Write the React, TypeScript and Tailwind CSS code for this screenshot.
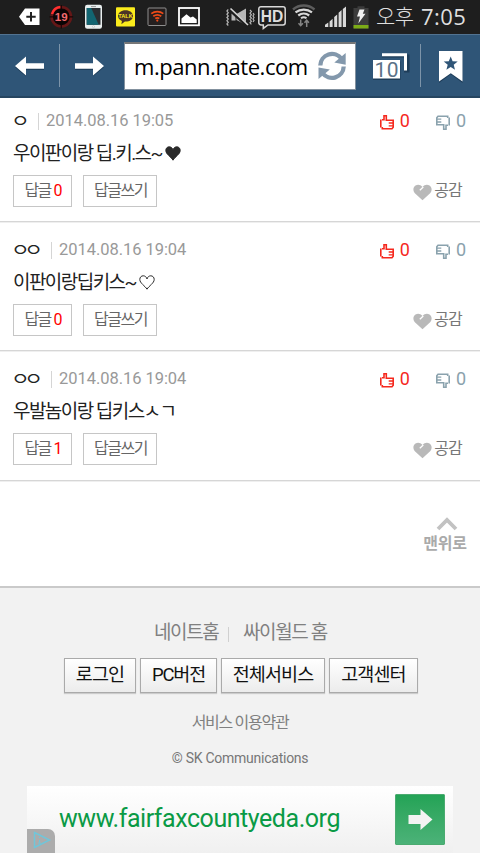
import React from 'react';

type Vote = 'up' | 'down';

interface Comment {
  author: string;
  date: string;
  body: string;
  heart?: 'solid' | 'outline';
  replies: number;
  rowClass: string;
  authorClass: string;
}

const comments: Comment[] = [
  { author: 'ㅇ', date: '2014.08.16 19:05', body: '우이판이랑 딥.키.스~', heart: 'solid', replies: 0, rowClass: 'h-[124px] pt-[13px]', authorClass: 'w-[15px]' },
  { author: 'ㅇㅇ', date: '2014.08.16 19:04', body: '이판이랑딥키스~', heart: 'outline', replies: 0, rowClass: 'h-[129px] pt-[18px]', authorClass: 'w-[28px]' },
  { author: 'ㅇㅇ', date: '2014.08.16 19:04', body: '우발놈이랑 딥키스ㅅㄱ', replies: 1, rowClass: 'h-[130px] pt-[18px]', authorClass: 'w-[28px]' },
];

/* A vertical slice of a bar, drawn in the bar's own coordinates. */
function Slice({ x, w, y = 0, h = 33, children }: { x: number; w: number; y?: number; h?: number; children: React.ReactNode }) {
  return (
    <svg className="block shrink-0" width={w} height={h} viewBox={`${x} ${y} ${w} ${h}`} fill="none">
      {children}
    </svg>
  );
}

function StatusBar() {
  return (
    <div className="flex h-[34px] items-start bg-[#1e1e1e]">
      <Slice x={0} w={45}>
        <path d="M25 8.5H39.5V25H25L19 16.8Z" fill="#fff" />
        <path d="M31 12v9.4M26.3 16.7h9.4" stroke="#222" strokeWidth="2" />
      </Slice>
      <Slice x={45} w={32}>
        <circle cx="61.3" cy="16.8" r="9.7" fill="#0b0505" stroke="#651717" strokeWidth="2.6" />
        <path d="M52 14A9.8 9.8 0 0 1 60.4 7" stroke="#ff3030" strokeWidth="2.4" />
        <path d="M61.3 5v4M61.3 24.5v4M49.5 16.8h3.5M69.6 16.8h3.5" stroke="#190606" strokeWidth="1.2" />
        <text x="61.2" y="21" textAnchor="middle" fontSize="11.5" fontWeight="700" fill="#f26a70" fontFamily="Liberation Sans, sans-serif">19</text>
      </Slice>
      <Slice x={77} w={32}>
        <rect x="85" y="4.7" width="17" height="24" rx="2.2" fill="#e9eeee" />
        <rect x="86.7" y="8" width="13.8" height="16.8" fill="#2b2f33" />
        <path d="M86.7 8h4.5l7.5 16.8h-12z" fill="#126571" />
        <path d="M91 6.6h5" stroke="#999" />
        <circle cx="93.5" cy="26.7" r="1" fill="#fff" stroke="#aaa" strokeWidth=".5" />
      </Slice>
      <Slice x={109} w={32}>
        <rect x="116" y="7.3" width="19" height="19.2" rx="1" fill="#fbec1c" />
        <path d="M125.5 10.3c-4.300 0-7.500 2.500-7.500 5.600 0 2.200 1.600 4 3.900 5l-.5 3.300 3.500-2.700c5 .2 8.100-2.400 8.100-5.600s-3.200-5.600-7.500-5.600z" fill="#4b3427" />
        <text x="125.5" y="18.2" textAnchor="middle" fontSize="5.6" fontWeight="700" fill="#fbec1c" fontFamily="Liberation Sans, sans-serif">TALK</text>
      </Slice>
      <Slice x={141} w={32}>
        <rect x="148" y="8" width="18" height="17.500" rx="1" fill="#241f1f" stroke="#8f8f8f" />
        <path d="M151.300 13.600c3.500-2.600 8.500-2.600 12 0M153.300 16.200c2.400-1.700 5.600-1.700 8 0M155.300 18.500c1.300-.8 2.700-.8 4 0" stroke="#ee4b18" strokeWidth="1.700" />
        <circle cx="157.300" cy="20.600" r="1.100" fill="#ee4b18" />
      </Slice>
      <Slice x={173} w={47}>
        <rect x="179" y="8" width="20" height="17.300" fill="#202020" stroke="#fff" strokeWidth="1.800" />
        <path d="M181.500 23v-4.500l5-4.300 4 3.300 2.500-1 3.700 3v3.500z" fill="#fff" />
      </Slice>
      <Slice x={220} w={36}>
        <path d="M228.300 9.500l-1.400 1.600 1.400 1.600-1.400 1.600 1.400 1.600-1.400 1.600 1.400 1.600-1.400 1.600 1.400 1.600-1.400 1.600 1.400 1.600M250 10l1.400 1.600-1.400 1.600 1.400 1.600-1.400 1.600 1.400 1.600-1.400 1.600 1.400 1.600-1.400 1.600 1.400 1.600M253 13l1 1.500-1 1.500 1 1.500-1 1.500 1 1.500-1 1.500" stroke="#b5b5b5" strokeWidth="1.200" />
        <path d="M231.500 13.500h4v7h-4zM236.500 14l9.500-5.500v16.500l-9.500-5z" fill="#b7b7b7" />
        <path d="M229.500 9.500l18.500 17" stroke="#1e1e1e" strokeWidth="3.200" />
        <path d="M230.500 8.500l17.500 16.500" stroke="#d7d7d7" strokeWidth="1.600" />
      </Slice>
      <Slice x={256} w={33}>
        <path d="M261 6.700h22a2.200 2.200 0 0 1 2.200 2.200v13.800a2.200 2.200 0 0 1-2.200 2.200h-15l-4.700 3.500v-3.500H261a2.200 2.200 0 0 1-2.200-2.200V8.900a2.200 2.200 0 0 1 2.200-2.200z" stroke="#d9d9d9" strokeWidth="1.500" />
        <text x="260.800" y="21.900" textLength="22.500" lengthAdjust="spacingAndGlyphs" fontSize="17" fontWeight="700" fill="#dedede" fontFamily="Liberation Sans, sans-serif">HD</text>
      </Slice>
      <Slice x={289} w={32}>
        <path d="M293 9.500c6-5.300 15.500-5.300 21.500 0" stroke="#5d5d5d" strokeWidth="2.400" />
        <path d="M295.500 12.300c4.800-3.700 11.700-3.700 16.500 0M298.300 15.500c3.200-2.400 7.700-2.400 10.900 0" stroke="#d8d8d8" strokeWidth="2.200" />
        <path d="M301 18.300c1.700-1.200 3.800-1.200 5.500 0" stroke="#d8d8d8" strokeWidth="2" />
        <path d="M300.700 19.500v6M298.500 23.200l2.200 2.500 2.200-2.500M306.700 27v-6M304.500 22.700l2.200-2.500 2.200 2.500" stroke="#858585" strokeWidth="1.500" />
      </Slice>
      <Slice x={321} w={28}>
        <path d="M325 27v-2.300l3.300-2.300V27zM329.600 27v-5.500l3-2.800V27zM334.200 27V17l3-2.600V27zM338.600 27V12.700l3-2.800V27zM342.800 27V9l3.200-2.500V27z" fill="#d9d9d9" />
      </Slice>
      <Slice x={349} w={27}>
        <path d="M353.500 8h4V6.300h7V8h4v20.500h-15z" fill="#3c3c3c" />
        <path d="M353.500 25h15v3.500h-15z" fill="#7cab17" />
        <path d="M359.500 9.500h5l-1.700 4.300h2.700l-7.200 9.700 1.700-7h-3z" fill="#f0f0f0" />
      </Slice>
      <div className="flex h-[33px] items-center gap-[7px] whitespace-nowrap font-['Noto_Sans_CJK_KR',sans-serif] text-[21px] font-light leading-[33px] text-[#dfdfdf]">
        <span className="w-[38px] pb-[2px] tracking-[-0.5px]">오후</span>
        <span className="font-['Open_Sans',sans-serif] text-[22px] font-normal tracking-[0.4px]">7:05</span>
      </div>
    </div>
  );
}

function Toolbar() {
  return (
    <div className="flex h-[64px] items-center border-t border-b-2 border-t-[#527391] border-b-[#264560] bg-[#2f5577]">
      <button className="h-[61px] w-[59px]" aria-label="back">
        <Slice x={0} w={59} y={35} h={61}>
          <path d="M15 67.200L26 57.800v6.700h18v5.400H26v6.700z" fill="#1e3d59" />
          <path d="M15 66L26 56.600v6.700h18v5.400H26v6.700z" fill="#fff" />
        </Slice>
      </button>
      <div className="h-[43px] w-px bg-[#7d94a9]" />
      <button className="h-[61px] w-[64px]" aria-label="forward">
        <Slice x={60} w={64} y={35} h={61}>
          <path d="M104 67.200L93 57.800v6.700H75v5.400h18v6.700z" fill="#1e3d59" />
          <path d="M104 66L93 56.600v6.700H75v5.400h18v6.700z" fill="#fff" />
        </Slice>
      </button>
      <div className="flex h-[48px] w-[232px] items-center border border-t-2 border-[#83919e] border-t-[#777] bg-white">
        <div className="ml-[9px] w-[174px] whitespace-nowrap font-['Open_Sans',sans-serif] text-[22px] leading-[40px] tracking-[-0.45px] text-black">
          m.pann.nate.com
        </div>
        <Slice x={308} w={47} y={46} h={40}>
          <path d="M320.300 65.500A11.700 11.700 0 0 1 341.500 58.800" stroke="#8398ac" strokeWidth="4.300" />
          <path d="M343.700 66.500A11.700 11.700 0 0 1 322.500 73" stroke="#8398ac" strokeWidth="4.300" />
          <path d="M345.700 53V64.700L334.300 62.600z" fill="#8398ac" />
          <path d="M318.500 67.500L329.800 69.500 318.500 79z" fill="#8398ac" />
        </Slice>
      </div>
      <Slice x={356} w={64} y={35} h={61}>
        <path d="M382 56h26v15h-4" stroke="#1e3d59" strokeWidth="3" />
        <path d="M382 54.700h23.500v15.800" stroke="#fff" strokeWidth="3" />
        <rect x="373" y="61.500" width="27.500" height="18.500" fill="#1e3d59" />
        <rect x="373" y="60" width="27" height="18.500" fill="#fff" />
        <text x="374.500" y="76.500" textLength="24" fontSize="21" fill="#5b7288" fontFamily="Roboto, sans-serif">10</text>
      </Slice>
      <div className="h-[43px] w-px bg-[#7d94a9]" />
      <Slice x={421} w={59} y={35} h={61}>
        <path d="M439 52h23.500v31l-11.700-8.700L439 83z" fill="#1e3d59" />
        <path d="M439 51h23.500v30.500l-11.700-8.300L439 81.500z" fill="#fff" />
        <path d="M450.700 56.500l1.900 4.800 5.100.3-4 3.200 1.300 5-4.300-2.800-4.300 2.800 1.300-5-4-3.200 5.100-.3z" fill="#2f5577" />
      </Slice>
    </div>
  );
}

function Thumb({ kind }: { kind: Vote }) {
  const color = kind === 'up' ? '#f5281e' : '#8aa2ad';
  return (
    <svg width="14" height="15" viewBox="0 0 14 15" fill="none" stroke={color} strokeWidth="1.600" className={kind === 'down' ? 'block rotate-180' : 'block'}>
      <path d="M.8 4.500v8" />
      <path d="M2 4.800H4V.8H6.300V5.300H13.200V12.300L12 13.700H2.300V12" />
      <path d="M8.700 8H13M8.700 10.800H13" strokeWidth="1.300" />
    </svg>
  );
}

function CommentRow({ c }: { c: Comment }) {
  const button = 'flex h-[32px] items-center justify-center border-[1.5px] border-[#c6c6c6] bg-white text-[16px] leading-none text-[#666]';
  return (
    <article className={`border-b border-[#d6d6d6] px-[13px] shadow-[0_1px_0_#efefef] ${c.rowClass}`}>
      <div className="flex h-[21px] items-center font-['Roboto','Noto_Sans_CJK_KR',sans-serif] text-[16.500px]">
        <span className={`${c.authorClass} whitespace-nowrap text-[#222]`}>
          <span className="-ml-[2px] inline-block origin-left scale-x-120 text-[17px] tracking-[-4.500px]">{c.author}</span>
        </span>
        <span className="mr-[7px] ml-[10px] h-[17px] w-px bg-[#d5d5d5]" />
        <span className="whitespace-nowrap tracking-[-0.050px] text-[#999]">{c.date}</span>
        <span className="mb-[2px] ml-auto flex items-center text-[18px] text-[#f5281e]">
          <span className="mt-[3px]"><Thumb kind="up" /></span>
          <span className="ml-[6px]">0</span>
        </span>
        <span className="mr-[1px] mb-[2px] ml-[26px] flex items-center text-[18px] text-[#8aa2ad]">
          <span className="mt-[3px]"><Thumb kind="down" /></span>
          <span className="ml-[6px]">0</span>
        </span>
      </div>
      <div className="mt-[6px] flex h-[32px] items-center whitespace-nowrap text-[19px] tracking-[-1.550px] text-[#222]">
        <span>{c.body}</span>
        {c.heart && (
          <svg className="mb-[2px] ml-[3px]" width="16" height="15" viewBox="0 0 16 15" fill={c.heart === 'solid' ? '#2b2b2b' : 'none'} stroke="#2b2b2b" strokeWidth="1">
            <path d="M8 14.200C6 10.800 .8 8.200 .8 4.400 .8 2.300 2.300.8 4.200.8 6 .8 7.500 2 8 4 8.500 2 10 .8 11.800.8c1.900 0 3.400 1.500 3.400 3.600C15.200 8.200 10 10.800 8 14.200z" />
          </svg>
        )}
      </div>
      <div className="mt-[5px] flex items-center">
        <button className={`${button} w-[59px] pl-[2px] tracking-[-1.800px]`}>
          답글<span className="ml-[3px] font-['Roboto',sans-serif] tracking-normal text-[#f00]">{c.replies}</span>
        </button>
        <button className={`${button} ml-[11px] w-[74px] pl-[1px] tracking-[-1.500px]`}>답글쓰기</button>
        <span className="mr-[5px] ml-auto flex items-center text-[16px] leading-none tracking-[-0.800px] text-[#777]">
          <svg className="mt-[2px] mr-[2px]" width="19" height="17" viewBox="0 0 19 17">
            <path d="M9.500 16.300L1.600 9C-.5 6.500.3 2.800 2.500 1.500 5 .2 7.500.8 9.500 3c2-2.200 4.500-2.800 7-1.500 2.200 1.300 3 5 .9 7.500z" fill="#b9b9b9" />
            <path d="M10.300 3L6.800 6.300" stroke="#fff" strokeWidth="1.300" />
          </svg>
          <span className="mb-[1px]">공감</span>
        </span>
      </div>
    </article>
  );
}

function Footer() {
  const button = 'flex h-[35px] items-center justify-center border-[1.5px] border-[#aaa] bg-linear-to-b from-white to-[#ececec] pb-[1px] text-[18.500px] leading-none text-[#111] shadow-[0_1px_1px_#ccc] whitespace-nowrap';
  return (
    <footer className="flex flex-1 flex-col items-center border-t-2 border-[#cacaca] bg-[#f2f2f2]">
      <nav className="mt-[30px] flex h-[30px] w-full items-center pl-[154px] text-[19px] tracking-[-1.400px] whitespace-nowrap text-[#808080]">
        <a className="w-[74px]">네이트홈</a>
        <span className="mt-[2px] mr-[14px] h-[15px] w-px bg-[#d0d0d0]" />
        <a>싸이월드 홈</a>
      </nav>
      <div className="mt-[10px] flex w-full gap-[4px] pl-[64px]">
        <button className={`${button} w-[72px] tracking-[-0.900px]`}>로그인</button>
        <button className={`${button} w-[77px] tracking-[-1.200px]`}>PC버전</button>
        <button className={`${button} w-[104px] tracking-[-0.900px]`}>전체서비스</button>
        <button className={`${button} w-[89px] tracking-[-0.900px]`}>고객센터</button>
      </div>
      <a className="mt-[20px] text-[16px] leading-[20px] tracking-[-1.300px] text-[#808080]">서비스 이용약관</a>
      <p className="mt-[15px] font-['Roboto',sans-serif] text-[14px] leading-[20px] tracking-[-0.250px] text-[#777]">© SK Communications</p>
      <div className="relative mt-[18px] flex h-[67px] w-[426px] items-center overflow-hidden bg-linear-to-b from-white to-[#f0f0f0]">
        <span className="mb-[2px] ml-[32px] font-['Roboto',sans-serif] text-[25px] tracking-[-0.450px] whitespace-nowrap text-[#0a9a45]">www.fairfaxcountyeda.org</span>
        <span className="mr-[8px] ml-auto flex h-[51px] w-[50px] items-center justify-center rounded-[1px] border border-[#4bab70] bg-linear-to-b from-[#23a356] to-[#4bb278]">
          <svg width="25" height="21" viewBox="0 0 25 21">
            <path d="M.5 6h12V0L24.500 10.500 12.500 21v-6H.5z" fill="#f3f3f3" />
          </svg>
        </span>
        <span className="absolute bottom-0 left-0 h-[24px] w-[28px] rounded-tr-[7px] bg-[#acacac]">
          <svg width="28" height="24" viewBox="0 0 28 24" fill="none" stroke="#70c6da" strokeWidth="1.500">
            <path d="M7.500 3.500v15L22.500 11z" />
            <path d="M12.500 8v1M12.500 11v2.500M11 14h3" strokeWidth="1" />
          </svg>
        </span>
      </div>
    </footer>
  );
}

export default function App() {
  return (
    <div className="flex h-[853px] w-[480px] flex-col overflow-hidden bg-white font-['Roboto','Noto_Sans_CJK_KR',sans-serif]">
      <StatusBar />
      <Toolbar />
      <main>
        {comments.map((c, i) => (
          <CommentRow key={i} c={c} />
        ))}
        <div className="flex h-[105px] justify-end pr-[13px]">
          <button className="mt-[36px] flex h-[40px] w-[44px] flex-col items-center text-[16px] leading-[22px] font-bold tracking-[-0.300px] whitespace-nowrap text-[#aaa]">
            <svg className="ml-[4px] shrink-0" width="22" height="16" viewBox="0 0 22 16" fill="none" stroke="#c2c2c2" strokeWidth="3.800">
              <path d="M2 12L11 3l9 9" />
            </svg>
            <span>맨위로</span>
          </button>
        </div>
      </main>
      <Footer />
    </div>
  );
}
